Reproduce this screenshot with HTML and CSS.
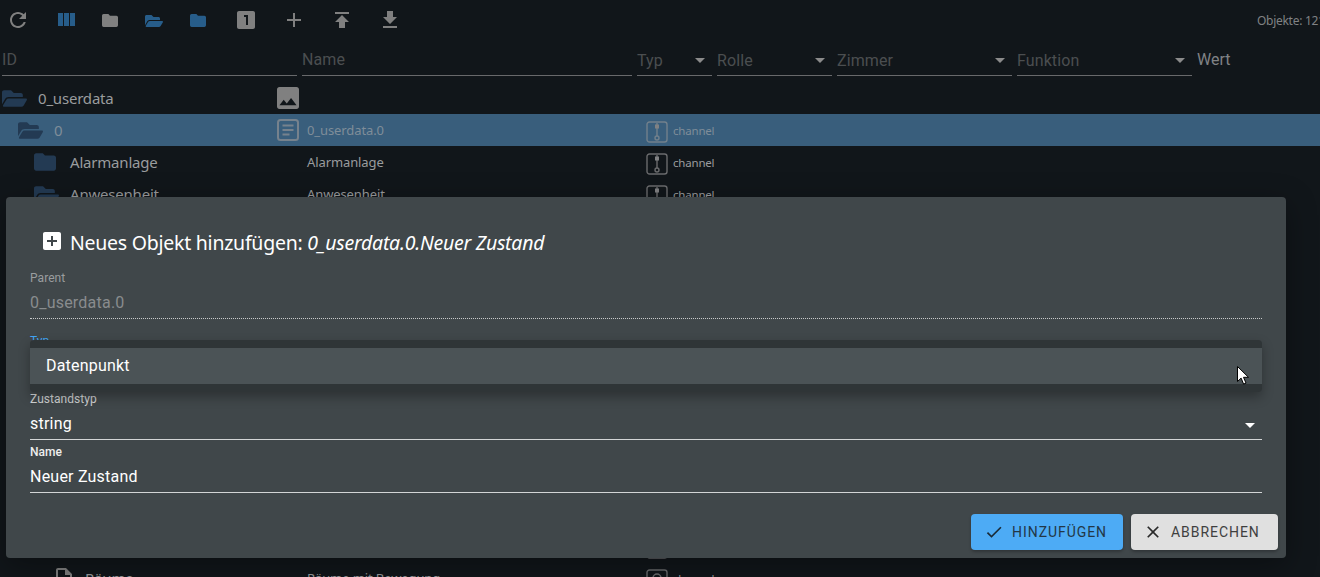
FILE: index.html
```html
<!DOCTYPE html>
<html lang="de">
<head>
<meta charset="utf-8">
<title>Objekte</title>
<link rel="stylesheet" href="styles.css">
</head>
<body>
<div class="page">
  <div class="toolbar">
    <span class="tool"><svg class="i24 gray" viewBox="0 0 24 24"><path d="M17.65 6.35C16.2 4.9 14.21 4 12 4c-4.42 0-7.99 3.58-7.99 8s3.57 8 7.99 8c3.73 0 6.84-2.55 7.73-6h-2.08c-.82 2.33-3.04 4-5.65 4-3.31 0-6-2.69-6-6s2.69-6 6-6c1.66 0 3.14.69 4.22 1.78L13 11h7V4l-2.35 2.35z"/></svg></span>
    <span class="tool wide"><svg class="i24 blue" viewBox="0 0 24 24"><path d="M10 18h5V5h-5v13zm-6 0h5V5H4v13zM16 5v13h5V5h-5z"/></svg></span>
    <span class="tool"><svg class="i-folder gray" viewBox="2 4 20 16"><path d="M10 4H4c-1.1 0-1.99.9-1.99 2L2 18c0 1.1.9 2 2 2h16c1.1 0 2-.9 2-2V8c0-1.1-.9-2-2-2h-8l-2-2z"/></svg></span>
    <span class="tool"><svg class="i-open blue" viewBox="0 64 576 384"><path d="M572.694 292.093L500.27 416.248A63.997 63.997 0 0 1 444.989 448H45.025c-18.523 0-30.064-20.093-20.731-36.093l72.424-124.155A64 64 0 0 1 152 256h399.964c18.523 0 30.064 20.093 20.73 36.093zM152 224h328v-48c0-26.51-21.49-48-48-48H272l-64-64H48C21.49 64 0 85.49 0 112v278.046l69.077-118.418C86.214 242.25 117.989 224 152 224z"/></svg></span>
    <span class="tool"><svg class="i-folder blue" viewBox="2 4 20 16"><path d="M10 4H4c-1.1 0-1.99.9-1.99 2L2 18c0 1.1.9 2 2 2h16c1.1 0 2-.9 2-2V8c0-1.1-.9-2-2-2h-8l-2-2z"/></svg></span>
    <span class="tool wide"><svg class="i24 gray" viewBox="0 0 24 24"><path d="M19 3H5c-1.1 0-2 .9-2 2v14c0 1.1.9 2 2 2h14c1.1 0 2-.9 2-2V5c0-1.1-.9-2-2-2zm-5 14h-2V9h-2V7h4v10z"/></svg></span>
    <span class="tool wide"><svg class="i24 gray" viewBox="0 0 24 24"><path d="M19 13h-6v6h-2v-6H5v-2h6V5h2v6h6v2z"/></svg></span>
    <span class="tool wide"><svg class="i24 gray" viewBox="0 0 24 24"><path d="M5 4v2h14V4H5zm0 10h4v6h6v-6h4l-7-7-7 7z"/></svg></span>
    <span class="tool wide"><svg class="i24 gray" viewBox="0 0 24 24"><path d="M19 9h-4V3H9v6H5l7 7 7-7zM5 18v2h14v-2H5z"/></svg></span>
    <div class="count">Objekte: 121</div>
  </div>

  <div class="filters">
    <div class="filter f-id"><span>ID</span></div>
    <div class="filter f-name"><span>Name</span></div>
    <div class="filter f-typ select"><span>Typ</span><i class="caret"></i></div>
    <div class="filter f-rolle select"><span>Rolle</span><i class="caret"></i></div>
    <div class="filter f-zimmer select"><span>Zimmer</span><i class="caret"></i></div>
    <div class="filter f-funktion select"><span>Funktion</span><i class="caret"></i></div>
    <div class="wert">Wert</div>
  </div>

  <div class="tree">
    <div class="row">
      <div class="id lvl0">
        <svg class="ficon open" viewBox="0 64 576 384"><path d="M572.694 292.093L500.27 416.248A63.997 63.997 0 0 1 444.989 448H45.025c-18.523 0-30.064-20.093-20.731-36.093l72.424-124.155A64 64 0 0 1 152 256h399.964c18.523 0 30.064 20.093 20.73 36.093zM152 224h328v-48c0-26.51-21.49-48-48-48H272l-64-64H48C21.49 64 0 85.49 0 112v278.046l69.077-118.418C86.214 242.25 117.989 224 152 224z"/></svg>
        <span>0_userdata</span>
      </div>
      <svg class="rowicon" viewBox="3 3 18 18"><path d="M21 19V5c0-1.1-.9-2-2-2H5c-1.1 0-2 .9-2 2v14c0 1.1.9 2 2 2h14c1.1 0 2-.9 2-2zM8.5 13.5l2.5 3.01L14.5 12l4.5 6H5l3.5-4.5z"/></svg>
    </div>
    <div class="row selected">
      <div class="id lvl1">
        <svg class="ficon open" viewBox="0 64 576 384"><path d="M572.694 292.093L500.27 416.248A63.997 63.997 0 0 1 444.989 448H45.025c-18.523 0-30.064-20.093-20.731-36.093l72.424-124.155A64 64 0 0 1 152 256h399.964c18.523 0 30.064 20.093 20.73 36.093zM152 224h328v-48c0-26.51-21.49-48-48-48H272l-64-64H48C21.49 64 0 85.49 0 112v278.046l69.077-118.418C86.214 242.25 117.989 224 152 224z"/></svg>
        <span>0</span>
      </div>
      <svg class="rowicon outline" viewBox="0 0 22 22"><rect x="1" y="1" width="20" height="20" rx="2.5"/><path d="M5.5 6.5h11M5.5 11h11M5.5 15.5h7"/></svg>
      <div class="name">0_userdata.0</div>
      <svg class="chan" viewBox="0 0 22 22"><rect x="1" y="1" width="20" height="20" rx="2.5"/><path d="M11 2v13"/><rect class="knob" x="9" y="3.5" width="4" height="4"/><circle cx="11" cy="17" r="2"/></svg>
      <div class="type">channel</div>
    </div>
    <div class="row">
      <div class="id lvl2">
        <svg class="ficon closed" viewBox="2 4 20 16"><path d="M10 4H4c-1.1 0-1.99.9-1.99 2L2 18c0 1.1.9 2 2 2h16c1.1 0 2-.9 2-2V8c0-1.1-.9-2-2-2h-8l-2-2z"/></svg>
        <span>Alarmanlage</span>
      </div>
      <div class="rowgap"></div>
      <div class="name">Alarmanlage</div>
      <svg class="chan" viewBox="0 0 22 22"><rect x="1" y="1" width="20" height="20" rx="2.5"/><path d="M11 2v13"/><rect class="knob" x="9" y="3.5" width="4" height="4"/><circle cx="11" cy="17" r="2"/></svg>
      <div class="type">channel</div>
    </div>
    <div class="row">
      <div class="id lvl2">
        <svg class="ficon open" viewBox="0 64 576 384"><path d="M572.694 292.093L500.27 416.248A63.997 63.997 0 0 1 444.989 448H45.025c-18.523 0-30.064-20.093-20.731-36.093l72.424-124.155A64 64 0 0 1 152 256h399.964c18.523 0 30.064 20.093 20.73 36.093zM152 224h328v-48c0-26.51-21.49-48-48-48H272l-64-64H48C21.49 64 0 85.49 0 112v278.046l69.077-118.418C86.214 242.25 117.989 224 152 224z"/></svg>
        <span>Anwesenheit</span>
      </div>
      <div class="rowgap"></div>
      <div class="name">Anwesenheit</div>
      <svg class="chan" viewBox="0 0 22 22"><rect x="1" y="1" width="20" height="20" rx="2.5"/><path d="M11 2v13"/><rect class="knob" x="9" y="3.5" width="4" height="4"/><circle cx="11" cy="17" r="2"/></svg>
      <div class="type">channel</div>
    </div>
    <div class="hidden-rows"></div>
    <div class="row">
      <div class="id lvl2"></div>
      <div class="rowgap"></div>
      <div class="name"></div>
      <svg class="chan" viewBox="0 0 22 22"><rect x="1" y="1" width="20" height="20" rx="2.5"/></svg>
    </div>
    <div class="row">
      <div class="id lvl3">
        <svg class="ficon file" viewBox="4 2 16 20"><path d="M14 2H6c-1.1 0-1.99.9-1.99 2L4 20c0 1.1.89 2 1.99 2H18c1.1 0 2-.9 2-2V8l-6-6zM6 20V4h7v5h5v11H6z"/></svg>
        <span>Räume</span>
      </div>
      <div class="rowgap"></div>
      <div class="name">Räume mit Bewegung</div>
      <svg class="chan" viewBox="0 0 22 22"><rect x="1" y="1" width="20" height="20" rx="2.5"/><circle cx="11" cy="9" r="4"/></svg>
      <div class="type">channel</div>
    </div>
  </div>

  <div class="dialog">
    <div class="title">
      <svg class="title-icon" viewBox="0 0 24 24"><path d="M19 3H5c-1.11 0-2 .9-2 2v14c0 1.1.89 2 2 2h14c1.1 0 2-.9 2-2V5c0-1.1-.9-2-2-2zm-2 10h-4v4h-2v-4H7v-2h4V7h2v4h4v2z"/></svg>
      <span>Neues Objekt hinzufügen: <em>0_userdata.0.Neuer Zustand</em></span>
    </div>
    <div class="fields">
      <div class="field disabled">
        <label>Parent</label>
        <div class="value">0_userdata.0</div>
      </div>
      <div class="field focused">
        <label>Typ</label>
      </div>
      <div class="field">
        <label>Zustandstyp</label>
        <div class="value">string</div>
        <i class="caret white"></i>
      </div>
      <div class="field">
        <label class="strong">Name</label>
        <div class="value">Neuer Zustand</div>
      </div>
    </div>
    <div class="actions">
      <button class="btn primary"><svg viewBox="0 0 24 24"><path d="M9 16.17L4.83 12l-1.42 1.41L9 19 21 7l-1.41-1.41z"/></svg>Hinzufügen</button>
      <button class="btn neutral"><svg viewBox="0 0 24 24"><path d="M19 6.41L17.59 5 12 10.59 6.41 5 5 6.41 10.59 12 5 17.59 6.41 19 12 13.41 17.59 19 19 17.59 13.41 12z"/></svg>Abbrechen</button>
    </div>
  </div>

  <div class="menu"><div class="menu-item">Datenpunkt</div></div>

  <svg class="cursor" viewBox="0 0 12 19"><path d="M.5.5v15l3.6-3.4 2.5 6 2.4-1-2.5-5.8h5z"/></svg>
</div>
</body>
</html>
```

FILE: styles.css
```css
* { box-sizing: border-box; }
html, body { margin: 0; height: 100%; overflow: hidden; }
body { background: #11161a; font-family: Roboto, "Liberation Sans", sans-serif; }
.page { position: relative; width: 1320px; height: 577px; overflow: hidden; }

.toolbar { display: flex; align-items: center; height: 40px; padding-left: 6px; gap: 20px; }
.tool { display: flex; align-items: center; justify-content: center; width: 24px; height: 24px; flex: none; }
.tool.wide { margin-left: 4px; }
.i24 { width: 24px; height: 24px; }
.i-folder { width: 16px; height: 13px; margin-top: 1px; }
.i-open { width: 18px; height: 12px; margin-top: 1px; }
.gray { fill: #808080; }
.blue { fill: #275d8a; }
.count { margin-left: auto; margin-top: 2px; width: 63px; overflow: hidden; white-space: nowrap; font: 12px/14px "Noto Sans", sans-serif; letter-spacing: -.28px; color: #808284; }

.filters { display: flex; gap: 5px; height: 36px; padding-left: 2px; }
.filter { position: relative; height: 36px; border-bottom: 1px solid #68696b; font-size: 16px; line-height: 42px; color: #4b4e50; letter-spacing: .1px; }
.f-id { width: 295px; line-height: 40px; }
.f-name { width: 330px; line-height: 40px; }
.f-typ { width: 75px; }
.f-rolle { width: 115px; }
.f-zimmer { width: 175px; }
.f-funktion { width: 175px; }
.select .caret { position: absolute; right: 7px; top: 18px; }
.caret { display: block; width: 0; height: 0; border-left: 5px solid transparent; border-right: 5px solid transparent; border-top: 5px solid #8b8b8b; }
.wert { font-size: 16px; line-height: 40px; color: #808285; }

.tree { margin-top: 6px; }
.row { display: flex; align-items: center; height: 32px; color: #9a9c9e; }
.row.selected { background: #395e7c; color: #7f8d99; }
.hidden-rows { height: 320px; }
.id { display: flex; align-items: center; width: 277px; flex: none; font: 15px/20px "Noto Sans", sans-serif; letter-spacing: -.2px; }
.lvl0 { padding-left: 2px; }
.lvl1 { padding-left: 18px; }
.lvl2 { padding-left: 34px; }
.lvl3 { padding-left: 56px; }
.ficon { flex: none; fill: #233a53; }
.ficon.open { width: 25px; height: 17px; margin-right: 11px; }
.ficon.closed { width: 22px; height: 18px; margin-right: 14px; }
.lvl3 .ficon.file { width: 16px; height: 20px; margin-right: 13px; fill: #808080; }
.rowicon { width: 22px; height: 22px; flex: none; fill: #808080; margin-right: 8px; }
.rowicon.outline { fill: none; stroke: #76828d; stroke-width: 2; }
.rowgap { width: 30px; flex: none; }
.name { width: 339px; flex: none; font: 13px/18px "Noto Sans", sans-serif; letter-spacing: -.1px; }
.chan { width: 22px; height: 22px; flex: none; margin-top: 4px; fill: none; stroke: #6a6b6d; stroke-width: 1.4; }
.selected .chan { stroke: #72808c; }
.chan .knob { fill: #808183; stroke: none; }
.type { margin-left: 5px; margin-top: 2px; font: 11.5px/16px "Noto Sans", sans-serif; letter-spacing: -.2px; }

.dialog { position: absolute; left: 6px; top: 197px; width: 1280px; height: 361px; display: flex; flex-direction: column; background: #40474a; border-radius: 4px; box-shadow: 0 8px 30px rgba(0,0,0,.35); }
.title { display: flex; align-items: center; height: 69px; padding: 23px 0 0 34px; gap: 6px; color: #fff; font: 19.5px/24px "Noto Sans", sans-serif; letter-spacing: -.25px; }
.title-icon { width: 24px; height: 24px; fill: #fff; flex: none; margin-top: -5px; }
.title em { font-style: italic; }
.fields { display: flex; flex-direction: column; padding: 0 24px; }
.field { position: relative; height: 53px; border-bottom: 1px solid #d3d5d6; }
.field label { display: block; font-size: 12px; line-height: 14px; padding-top: 5px; height: 19px; color: #d0d2d3; letter-spacing: .05px; }
.field label.strong { color: #eeeeee; font-weight: 500; }
.field .value { margin-top: 7px; font-size: 16px; line-height: 22px; color: #fff; letter-spacing: .22px; }
.field .caret.white { position: absolute; right: 7px; top: 36px; border-top-color: #fff; }
.field.disabled { border-bottom: 1px dotted #c9cbcc; margin-bottom: 15px; }
.field.disabled label { color: #9a9d9f; }
.field.disabled .value { color: #898c8e; }
.field.focused label { color: #42a5f5; padding-top: 0; }

.actions { display: flex; justify-content: flex-end; gap: 8px; margin-top: 21px; padding-right: 8px; }
.btn { display: flex; align-items: center; height: 36px; border: 0; border-radius: 4px; font: 400 14px/20px Roboto, sans-serif; letter-spacing: .95px; text-transform: uppercase; box-shadow: 0 2px 3px rgba(0,0,0,.25); }
.btn svg { width: 20px; height: 20px; margin-right: 8px; flex: none; }
.primary { width: 152px; padding-left: 13px; background: #4dabf5; color: #233746; }
.primary svg { fill: #1a2a36; }
.neutral { width: 147px; padding-left: 12px; background: #e0e0e0; color: #3f3f3f; }
.neutral svg { fill: #2a2a2a; }

.menu { position: absolute; left: 30px; top: 340px; width: 1232px; height: 52px; padding: 8px 0; background: #2f3537; border-radius: 4px; box-shadow: 0 5px 12px rgba(0,0,0,.3); }
.menu-item { height: 36px; padding-left: 16px; background: #4b5356; color: #fff; font-size: 16px; line-height: 36px; letter-spacing: .2px; }

.cursor { position: absolute; left: 1237px; top: 366px; width: 12px; height: 19px; fill: #fff; stroke: #000; stroke-width: 1; }
```
